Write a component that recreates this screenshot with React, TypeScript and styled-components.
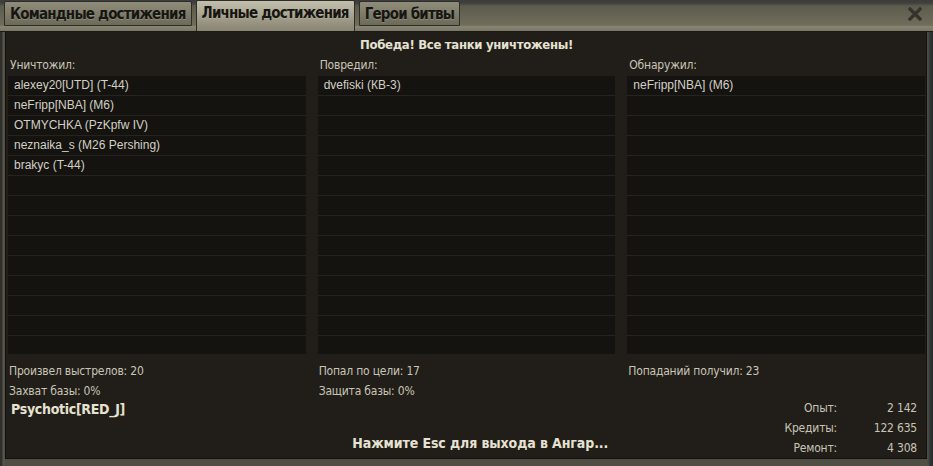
import React from 'react';
import styled, { createGlobalStyle } from 'styled-components';

const GlobalStyle = createGlobalStyle`
  html, body {
    margin: 0;
    padding: 0;
    background: #2b2720;
  }
`;

const narrow = `"DejaVu Sans Condensed", "DejaVu Sans", sans-serif`;

const destroyed = [
  'alexey20[UTD] (T-44)',
  'neFripp[NBA] (M6)',
  'OTMYCHKA (PzKpfw IV)',
  'neznaika_s (M26 Pershing)',
  'brakyc (T-44)',
];

const columns = [
  { label: 'Уничтожил:', items: destroyed, stats: ['Произвел выстрелов: 20', 'Захват базы: 0%'] },
  { label: 'Повредил:', items: ['dvefiski (КВ-3)'], stats: ['Попал по цели: 17', 'Защита базы: 0%'] },
  { label: 'Обнаружил:', items: ['neFripp[NBA] (M6)'], stats: ['Попаданий получил: 23'] },
];

const rewards = [
  { label: 'Опыт:', value: '2 142' },
  { label: 'Кредиты:', value: '122 635' },
  { label: 'Ремонт:', value: '4 308' },
];

const ROWS = 14;

const App: React.FC = () => {
  return (
    <>
      <GlobalStyle />
      <Window>
        <TabBar>
          <Tab>Командные достижения</Tab>
          <Tab $active>Личные достижения</Tab>
          <Tab>Герои битвы</Tab>
          <CloseButton>
            <svg width="14" height="14" viewBox="0 0 14 14">
              <path d="M2 2 L12 12 M12 2 L2 12" stroke="#33322c" strokeWidth="3.2" strokeLinecap="square" />
            </svg>
          </CloseButton>
        </TabBar>
        <Panel>
          <Title>Победа! Все танки уничтожены!</Title>
          <Columns>
            {columns.map((col) => (
              <Column key={col.label}>
                <ColumnLabel>{col.label}</ColumnLabel>
                <List>
                  {Array.from({ length: ROWS }).map((_, i) => (
                    <Row key={i}>{col.items[i] ?? ''}</Row>
                  ))}
                </List>
                <Stats>
                  {col.stats.map((s) => (
                    <StatLine key={s}>{s}</StatLine>
                  ))}
                </Stats>
              </Column>
            ))}
          </Columns>
          <Bottom>
            <BottomLeft>
              <PlayerName>Psychotic[RED_J]</PlayerName>
              <EscHint>Нажмите Esc для выхода в Ангар...</EscHint>
            </BottomLeft>
            <Rewards>
              {rewards.map((r) => (
                <React.Fragment key={r.label}>
                  <RewardLabel>{r.label}</RewardLabel>
                  <RewardValue>{r.value}</RewardValue>
                </React.Fragment>
              ))}
            </Rewards>
          </Bottom>
        </Panel>
      </Window>
    </>
  );
};

const Window = styled.div`
  width: 933px;
  height: 466px;
  display: flex;
  flex-direction: column;
  background: linear-gradient(90deg, #2f2f2b 0, #2f2f2b 2px, #5a584c 3px, #504e44 5px, #504e44 927px, #4a4940 928px, #2a3034 931px);
  overflow: hidden;
`;

const TabBar = styled.div`
  height: 32px;
  flex-shrink: 0;
  box-sizing: border-box;
  display: flex;
  align-items: flex-start;
  gap: 4px;
  padding-left: 4px;
  padding-right: 11px;
  background:
    linear-gradient(180deg, transparent 0, transparent 26px, #8a8674 26px, #7c7867 31px, #1a1915 31px),
    linear-gradient(180deg, #3a3d3c 0, #3f403c 3px, #5d5b4d 6px, #6f6c5b 24px, #75715f 26px);
`;

const Tab = styled.div<{ $active?: boolean }>`
  height: ${(p) => (p.$active ? '31px' : '25px')};
  margin-top: ${(p) => (p.$active ? '0' : '1px')};
  box-sizing: border-box;
  padding: 0 5px;
  line-height: 25px;
  font-family: ${narrow};
  font-weight: bold;
  font-size: 15px;
  letter-spacing: -0.8px;
  color: #161612;
  text-shadow: 0 1px 0 rgba(190, 186, 168, 0.35);
  white-space: nowrap;
  border: 1px solid #2e2d27;
  border-bottom: ${(p) => (p.$active ? 'none' : '1px solid #2e2d27')};
  border-radius: 2px 2px 0 0;
  background: ${(p) =>
    p.$active
      ? 'linear-gradient(180deg, #c3bfad 0, #aca895 40%, #948f7c 80%, #8a8674 100%)'
      : 'linear-gradient(180deg, #8f8c7b 0, #817e6c 45%, #6c6959 100%)'};
`;

const CloseButton = styled.div`
  margin-left: auto;
  margin-top: 7px;
  width: 14px;
  height: 14px;
  display: flex;
`;

const Panel = styled.div`
  flex: 1;
  margin: 0 6px 7px 5px;
  border: 1px solid #12110e;
  border-top: none;
  background: #211e19;
  display: flex;
  flex-direction: column;
  padding: 3px 1px 0 2px;
`;

const Title = styled.div`
  height: 20px;
  line-height: 20px;
  text-align: center;
  font-family: ${narrow};
  font-weight: bold;
  font-size: 13px;
  letter-spacing: -0.3px;
  color: #e6e2d2;
`;

const Columns = styled.div`
  display: grid;
  grid-template-columns: 1fr 1fr 1fr;
  column-gap: 12px;
`;

const Column = styled.div`
  display: flex;
  flex-direction: column;
`;

const ColumnLabel = styled.div`
  height: 21px;
  line-height: 21px;
  padding-left: 2px;
  font-family: ${narrow};
  font-size: 12px;
  letter-spacing: -0.2px;
  color: #c8c5b6;
`;

const List = styled.div`
  height: 278px;
  overflow: hidden;
  background: #151310;
`;

const Row = styled.div`
  height: 20px;
  box-sizing: border-box;
  border-bottom: 1px solid #27241f;
  line-height: 19px;
  padding-left: 6px;
  font-family: "Liberation Sans", sans-serif;
  font-size: 12px;
  color: #d2d0c5;
  white-space: nowrap;
`;

const Stats = styled.div`
  margin-top: 7px;
  height: 40px;
`;

const StatLine = styled.div`
  height: 20px;
  line-height: 20px;
  padding-left: 1px;
  font-family: ${narrow};
  font-size: 12px;
  letter-spacing: -0.2px;
  color: #c8c5b6;
`;

const Bottom = styled.div`
  flex: 1;
  display: flex;
`;

const BottomLeft = styled.div`
  flex: 1;
  display: flex;
  flex-direction: column;
`;

const PlayerName = styled.div`
  height: 16px;
  line-height: 16px;
  padding-left: 3px;
  font-family: ${narrow};
  font-weight: bold;
  font-size: 14px;
  letter-spacing: -0.3px;
  color: #e6e2d2;
`;

const EscHint = styled.div`
  margin-top: 18px;
  height: 16px;
  line-height: 16px;
  text-align: center;
  padding-left: 168px;
  font-family: ${narrow};
  font-weight: bold;
  font-size: 14px;
  letter-spacing: -0.1px;
  color: #e6e2d2;
`;

const Rewards = styled.div`
  margin-top: -3px;
  display: grid;
  grid-template-columns: auto 80px;
  grid-auto-rows: 20px;
  padding-right: 8px;
  align-self: flex-start;
`;

const RewardLabel = styled.div`
  line-height: 20px;
  text-align: right;
  font-family: ${narrow};
  font-size: 12px;
  letter-spacing: -0.2px;
  color: #c8c5b6;
`;

const RewardValue = styled(RewardLabel)``;

export default App;
